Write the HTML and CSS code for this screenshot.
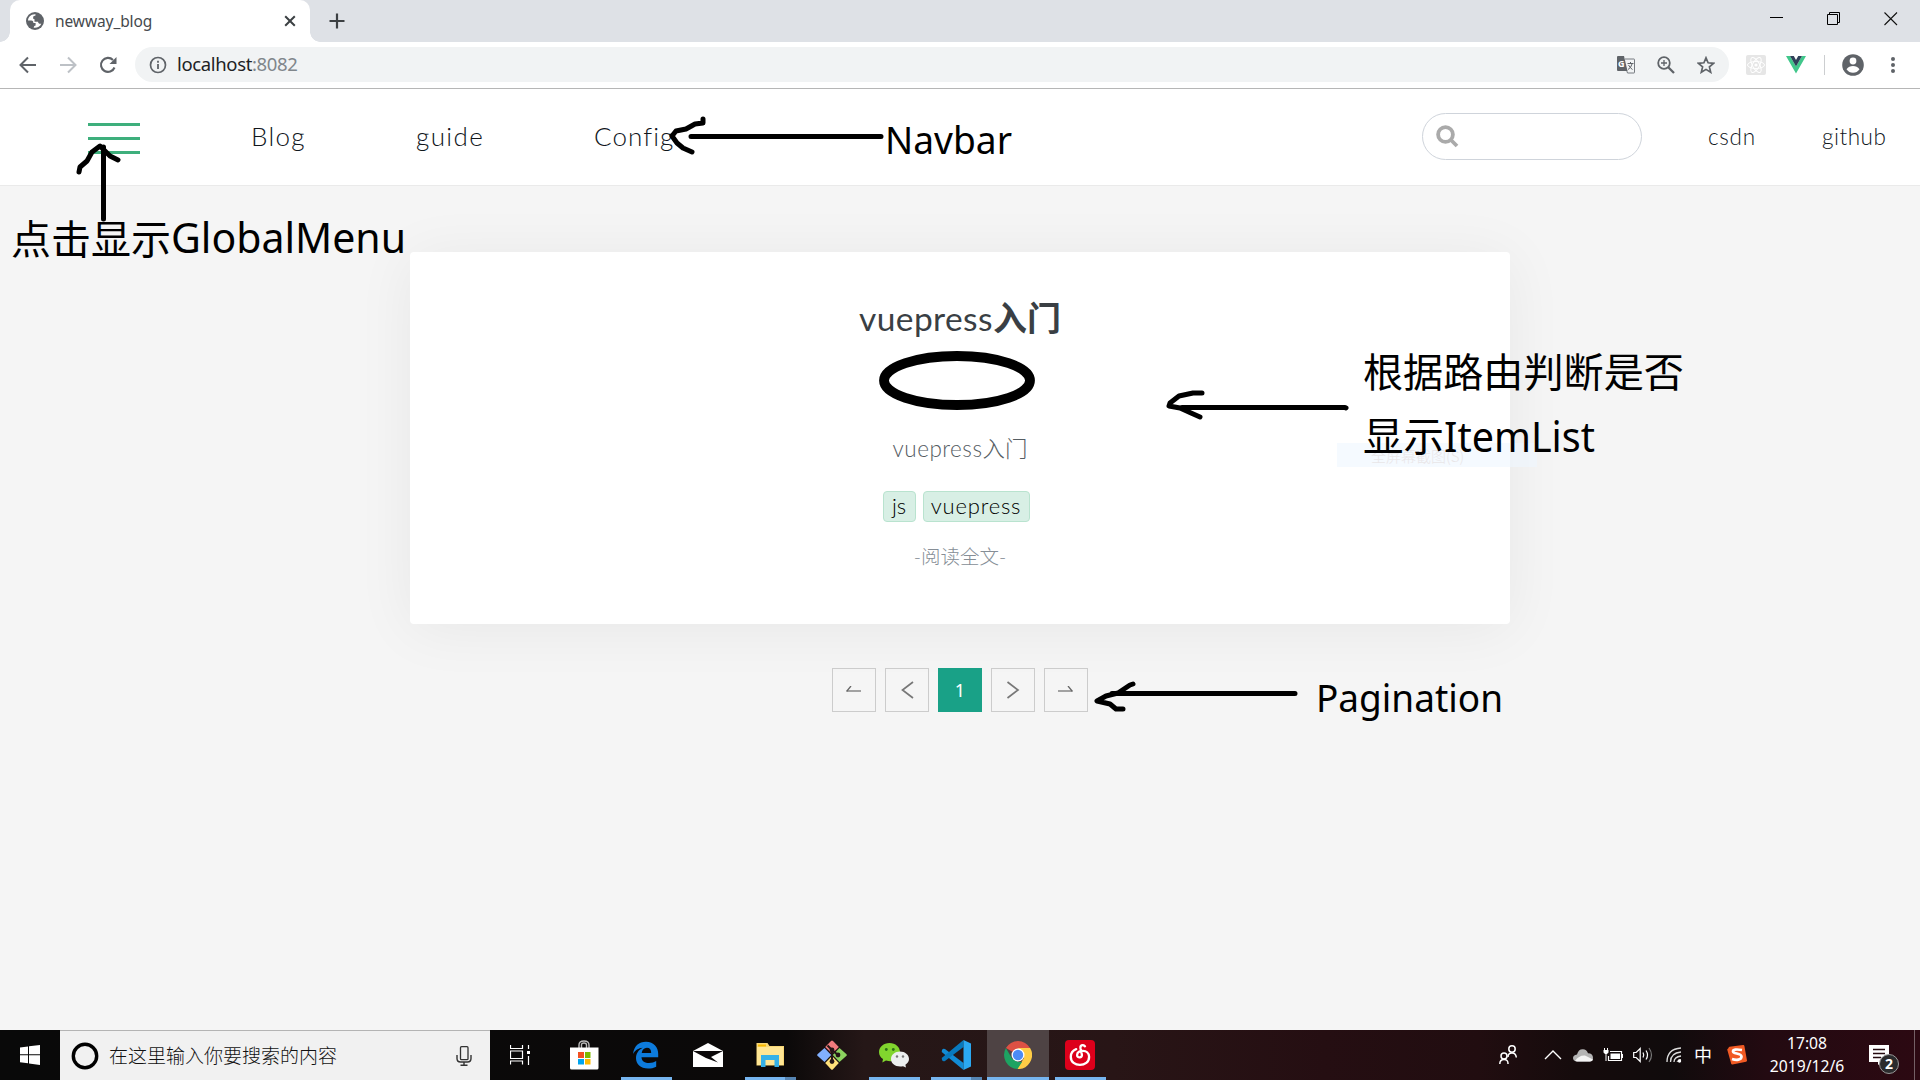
FILE: index.html
```html
<!DOCTYPE html>
<html lang="zh-CN">
<head>
<meta charset="utf-8">
<title>newway_blog</title>
<link rel="stylesheet" href="styles.css">
</head>
<body>
<div class="screen">
  <header class="tabstrip">
    <div class="tab">
      <svg class="favicon" width="18" height="18" viewBox="0 0 18 18"><circle cx="9" cy="9" r="9" fill="#5f6368"/><path d="M9.500 2.200C5 1.800 2 5 2 8.600h3.300c1.700 0 2.100 1 2.100 2.300H9.600v2.600c-1 .200-1.700.700-1.900 2.200 3 .5 6.400-.9 7.600-3.900-2.200.200-3.200-.5-3.200-2.100H8.500V7.300L7 6.500 7.400 4.300 9.500 3.500Z" fill="#fff"/></svg>
      <span class="tab-title">newway_blog</span>
      <svg width="12" height="12" viewBox="0 0 12 12"><path d="M1.200 1.200l9.600 9.600M10.800 1.200L1.200 10.800" stroke="#3c4043" stroke-width="2"/></svg>
    </div>
    <svg class="new-tab" width="16" height="16" viewBox="0 0 16 16"><path d="M8 .500v15M.5 8h15" stroke="#3c4043" stroke-width="2.200"/></svg>
    <div class="window-buttons">
      <svg width="14" height="14" viewBox="0 0 14 14"><path d="M0 5.500h13" stroke="#000"/></svg>
      <svg width="14" height="14" viewBox="0 0 14 14"><path d="M.5 2.500h10v10H.5zM2.500 2.500v-2h10v10h-2" fill="none" stroke="#000"/></svg>
      <svg width="14" height="14" viewBox="0 0 14 14"><path d="M.5.5l12.500 12.500M13 .5L.5 13" stroke="#111" stroke-width="1.100"/></svg>
    </div>
  </header>

  <div class="toolbar">
    <div class="history">
      <svg width="18" height="18" viewBox="0 0 18 18"><path d="M17 9H2M9 1.500L1.500 9 9 16.500" fill="none" stroke="#5f6368" stroke-width="2"/></svg>
      <svg width="18" height="18" viewBox="0 0 18 18"><path d="M1 9h15M9 1.500L16.500 9 9 16.500" fill="none" stroke="#bdc1c6" stroke-width="2"/></svg>
      <svg width="18" height="18" viewBox="0 0 18 18"><path d="M15.500 11.500A7 7 0 1 1 14 4" fill="none" stroke="#5f6368" stroke-width="2.100"/><path d="M17.500 1v7h-7z" fill="#5f6368"/></svg>
    </div>
    <div class="address">
      <svg width="18" height="18" viewBox="0 0 18 18"><circle cx="9" cy="9" r="7.500" fill="none" stroke="#5f6368" stroke-width="1.700"/><path d="M9 8v5M9 4.800v1.900" stroke="#5f6368" stroke-width="1.800"/></svg>
      <span class="url">localhost<span class="port">:8082</span></span>
      <div class="address-actions">
        <svg width="18" height="18" viewBox="0 0 18 18"><path d="M8 3h9q.5 0 .5.5v13q0 .5-.5.5h-6.500l-1-3" fill="none" stroke="#777b80"/><path d="M1 0h6l3.500 15H1Q0 15 0 14V1Q0 0 1 0Z" fill="#5f6368"/><path d="M10.500 7.500h6M13.500 6v1.500M15 8q-1 4-4 5.500M11.500 9q2 3.500 4 4.500" fill="none" stroke="#5f6368"/><text x="1" y="11" font-size="9" font-weight="700" fill="#fff">G</text></svg>
        <svg width="18" height="18" viewBox="0 0 18 18"><circle cx="7" cy="7" r="5.800" fill="none" stroke="#5f6368" stroke-width="1.800"/><path d="M11 11l6 6" stroke="#5f6368" stroke-width="2.300"/><path d="M7 4v6M4 7h6" stroke="#5f6368" stroke-width="1.300"/></svg>
        <svg width="18" height="18" viewBox="0 0 18 18"><path d="M9 1.800l2.100 5 5.500.5-4.200 3.600 1.300 5.400L9 13.400l-4.700 2.900 1.300-5.400L1.400 7.300l5.500-.5z" fill="none" stroke="#5f6368" stroke-width="1.700"/></svg>
      </div>
    </div>
    <div class="extensions">
      <svg width="20" height="20" viewBox="0 0 20 20"><rect width="20" height="20" rx="2" fill="#e6e6e6"/><g fill="none" stroke="#fff" stroke-width="1"><ellipse cx="10" cy="10" rx="8.500" ry="3.500"/><ellipse cx="10" cy="10" rx="8.500" ry="3.500" transform="rotate(60 10 10)"/><ellipse cx="10" cy="10" rx="8.500" ry="3.500" transform="rotate(120 10 10)"/></g><circle cx="10" cy="10" r="1.600" fill="#fff"/></svg>
      <svg width="20" height="18" viewBox="0 0 20 18"><path d="M0 0h4l6 10.500L16 0h4L10 17.500z" fill="#41c78b"/><path d="M4 0h3.800L10 4l2.200-4H16l-6 10.500z" fill="#2f4059"/></svg>
      <span class="separator"></span>
      <svg width="22" height="22" viewBox="0 0 22 22"><circle cx="11" cy="11" r="10.800" fill="#5f6368"/><circle cx="11" cy="7" r="3.400" fill="#fff"/><path d="M4.500 15.200Q7 12 11 12t6.500 3.200Q15 18.700 11 18.700T4.500 15.200Z" fill="#fff"/></svg>
      <svg width="6" height="18" viewBox="0 0 6 18"><g fill="#5f6368"><circle cx="3" cy="3" r="2"/><circle cx="3" cy="9" r="2"/><circle cx="3" cy="15" r="2"/></g></svg>
    </div>
  </div>

  <nav class="navbar">
    <button class="menu-button" aria-label="menu"><span></span><span></span><span></span></button>
    <a class="nav-link nav-blog">Blog</a>
    <a class="nav-link nav-guide">guide</a>
    <a class="nav-link nav-config">Config</a>
    <div class="search">
      <svg width="23" height="23" viewBox="0 0 23 23"><circle cx="9.500" cy="9.500" r="7.400" fill="none" stroke="#aaa" stroke-width="3.800"/><path d="M14.500 14.500l6.500 6.500" stroke="#aaa" stroke-width="3.800"/></svg>
    </div>
    <a class="side-link csdn">csdn</a>
    <a class="side-link github">github</a>
  </nav>

  <main class="content">
    <article class="card">
      <h1 class="card-title">vuepress<b>入门</b></h1>
      <p class="summary">vuepress<span>入门</span></p>
      <div class="tags"><span class="tag tag-js">js</span><span class="tag tag-vuepress">vuepress</span></div>
      <a class="more">-阅读全文-</a>
    </article>
    <div class="pagination">
      <span class="page"><svg width="16" height="8" viewBox="0 0 16 8"><path d="M1 5h14" stroke="#999" stroke-width="1.800"/><path d="M.5 5.500L5 0" stroke="#666" stroke-width="1.300"/></svg></span>
      <span class="page"><svg width="14" height="18" viewBox="0 0 14 18"><path d="M13 1L2.500 9 13 17" fill="none" stroke="#777" stroke-width="1.700"/></svg></span>
      <span class="page current">1</span>
      <span class="page"><svg width="14" height="18" viewBox="0 0 14 18"><path d="M1.500 1L12 9 1.500 17" fill="none" stroke="#777" stroke-width="1.700"/></svg></span>
      <span class="page"><svg width="16" height="8" viewBox="0 0 16 8"><path d="M0 5h14" stroke="#999" stroke-width="1.800"/><path d="M14.500 5.500L10 0" stroke="#666" stroke-width="1.300"/></svg></span>
    </div>
  </main>

  <footer class="taskbar">
    <div class="start"><svg width="20" height="20" viewBox="0 0 20 20"><path d="M0 2.600L8 1.500v7.800H0zM9 1.300L20 0v9.300H9zM0 10.300h8v7.900L0 17.200zM9 10.300h11V20L9 18.500z" fill="#fff"/></svg></div>
    <div class="task-search">
      <svg width="28" height="28" viewBox="0 0 28 28"><circle cx="14" cy="14" r="11.700" fill="none" stroke="#000" stroke-width="3.400"/></svg>
      <span>在这里输入你要搜索的内容</span>
      <svg width="16" height="20" viewBox="0 0 16 20"><rect x="4.500" y=".7" width="7.500" height="13" rx="1" fill="none" stroke="#333" stroke-width="1.300"/><path d="M1 9v3.500q0 3.500 3.500 3.500h7q3.500 0 3.500-3.500V9M8 16v3M4.500 19.200h7" fill="none" stroke="#333" stroke-width="1.400"/></svg>
    </div>
    <div class="app task-view"><svg width="20" height="20" viewBox="0 0 20 20"><path d="M.5 0v3.500h12V0M.5 19.500V16h12v3.500M.5 6h12v7.500H.5zM18.500 0v4M18.500 11v9" fill="none" stroke="#fff" stroke-width="1.200"/><path d="M17 6h3v3h-3z" fill="#fff"/></svg></div>
    <div class="app"><svg width="30" height="30" viewBox="0 0 30 30"><path d="M10 8V5q0-4 5-4t5 4v3M12.500 8V5q0-2 2.500-2t2.500 2v3" fill="none" stroke="#bbb" stroke-width="1.400"/><path d="M1 7.500h28.500V28q0 1.500-1.500 1.500H2.500Q1 29.500 1 28z" fill="#fff"/><path d="M9 12h6v6H9z" fill="#f25022"/><path d="M16 12h5.500v6H16z" fill="#7fba00"/><path d="M9 19h6v5.500H9z" fill="#00a4ef"/><path d="M16 19h5.500v5.500H16z" fill="#ffb900"/></svg></div>
    <div class="app open"><svg width="26" height="28" viewBox="0 0 26 28"><path d="M0 13C1 5 6 .8 13 .8c8 0 12.200 5.800 12.200 12v3.500H8.500c.3 4.300 3.500 5.800 7.500 5.800 3 0 5.300-.9 7.200-2v5.600c-2.400 1.300-5.300 1.900-8.200 1.900C7.500 27.600 3 23 3 17.300c0-4.500 2.300-8.300 6.700-10.500C5.500 7 2 9.500 0 13Zm8.700-1h9.500c.1-3.300-1.600-5.200-4.300-5.200-2.900 0-4.700 2.100-5.200 5.200Z" fill="#0d7bdc"/></svg></div>
    <div class="app"><svg width="30" height="24" viewBox="0 0 30 24"><path d="M0 8L15 0l15 8v16H0z" fill="#fff"/><path d="M0 8h30L18 14l7 5.500L13 15z" fill="#0b0809"/></svg></div>
    <div class="app open multi"><svg width="28" height="24" viewBox="0 0 28 24"><path d="M.5 0h11l2 3H28v19.500H.5z" fill="#f8d775"/><path d="M1 4h26v18H1z" fill="#ffe694"/><path d="M2 1.500h8v2H2z" fill="#f8b900"/><path d="M5 24V12h18v12h-4.500v-7h-9v7z" fill="#35b1e8"/></svg></div>
    <div class="app"><svg width="30" height="30" viewBox="0 0 30 30"><path d="M14 1q1-1 2 0l5.800 6-6.800 6.800L8.200 7z" fill="#f17b7d"/><path d="M7.500 8l6.700 7-6.700 7L.5 15.800q-.7-.8 0-1.600z" fill="#81b0ff"/><path d="M22.500 8l7 6.200q.7.800 0 1.600l-7 6.200-6.700-7z" fill="#8bd35f"/><path d="M15 16l6.800 7-5.800 6.300q-1 1-2 0L8.200 23z" fill="#ffe17a"/><path d="M10.500 5.500L15 10v12M15 10l6 5" stroke="#251717" stroke-width="2" fill="none"/><g fill="#251717"><circle cx="15" cy="10" r="2.400"/><circle cx="21" cy="15" r="2.400"/><circle cx="15" cy="21.500" r="2.400"/></g></svg></div>
    <div class="app open"><svg width="30" height="26" viewBox="0 0 30 26"><path d="M10.500 1C4.500 1 0 5 0 10c0 3 1.500 5.500 4 7L3.300 20.500 7 18.600C17 21 21 15 21 10S16.500 1 10.500 1Z" fill="#81d52e"/><circle cx="7.300" cy="7.500" r="1.400" fill="#2d7018"/><circle cx="14.300" cy="7.500" r="1.400" fill="#2d7018"/><path d="M21 9.500c-5 0-9 3.300-9 7.500 0 5 5 8.400 12 7.200l3 1.300-.6-2.700c2.200-1.500 3.600-3.500 3.600-5.800 0-4.200-4-7.500-9-7.500Z" fill="#eceff0"/><circle cx="18" cy="14.500" r="1.200" fill="#777"/><circle cx="24" cy="14.500" r="1.200" fill="#777"/></svg></div>
    <div class="app open multi"><svg width="30" height="30" viewBox="0 0 30 30"><path d="M1 10q1-2 3-1l18.500 14V30L.7 12z" fill="#128bd5"/><path d="M1 20q1 2 3 1L22.500 7V0L.7 18z" fill="#0879be"/><path d="M22.500 0L30 3.500v23L22.500 30z" fill="#2ba8f2"/></svg></div>
    <div class="app open active"><svg width="28" height="28" viewBox="0 0 28 28"><path d="M14 14L1.900 7A14 14 0 0 1 26.100 7z" fill="#dd5144"/><path d="M14 7h12.100A14 14 0 0 1 13 28l7-11z" fill="#ffcd46"/><path d="M1.900 7L8 17.500 14 21h4l-4.500 7A14 14 0 0 1 1.900 7Z" fill="#1da362"/><circle cx="14" cy="14" r="6.500" fill="#fff"/><circle cx="14" cy="14" r="5.200" fill="#4c8bf5"/></svg></div>
    <div class="app open"><svg width="30" height="30" viewBox="0 0 30 30"><rect width="30" height="30" rx="4" fill="#dd001b"/><path d="M20 6.300c-2.500-2.300-5-.8-4.500 2l1.400 6.500c.6 3-4.800 3.900-4.800.2 0-5.500 11.800-6.200 12 1.700.2 11-18.500 11-18.300 0 .1-4 2.200-6.300 5.400-7.500" fill="none" stroke="#fff" stroke-width="2.300" stroke-linecap="round"/></svg></div>
    <div class="tray">
      <div class="tray-icon people"><svg width="18" height="20" viewBox="0 0 18 20"><g fill="none" stroke="#fff" stroke-width="1.500"><circle cx="13" cy="4" r="3.200"/><circle cx="5" cy="11" r="3"/><path d="M9 12q0-4 4-4t4.300 4.500M.8 19q0-4.500 4.200-4.500T9 19"/></g></svg></div>
      <div class="tray-icon"><svg width="18" height="10" viewBox="0 0 18 10"><path d="M1 9l8-8 8 8" fill="none" stroke="#fff" stroke-width="1.400"/></svg></div>
      <div class="tray-icon"><svg width="20" height="13" viewBox="0 0 20 13"><path d="M4 12.500Q0 12 0 9q0-3 4-3.500Q5.500 0 10 .3q3.500.2 5 4Q20 4.500 20 9q0 3-3 3.500z" fill="#b4b4b4"/><path d="M2 12Q6 6 12 6.500l8 4q-.5 2-3 2H4z" fill="#f4f4f4"/></svg></div>
      <div class="tray-icon"><svg width="20" height="14" viewBox="0 0 20 14"><path d="M7 3.500h11.500v9h-13V8M19.500 6v4" fill="none" stroke="#fff" stroke-width="1.200"/><path d="M7.500 5.500H17V11H7.500zM.5 2h5v2.500L4 6H2L.5 4.500z" fill="#fff"/><path d="M1.500 0v2M4.500 0v2M3 6v7" stroke="#fff"/></svg></div>
      <div class="tray-icon"><svg width="20" height="16" viewBox="0 0 20 16"><path d="M.7 5.500h2.500l4-4v13l-4-4H.7z" fill="none" stroke="#fff" stroke-width="1.200"/><path d="M10 5.500q1.500 2.500 0 5M13 3.500q3 4.500 0 9" fill="none" stroke="#fff" stroke-width="1.200"/><path d="M16 1q5 7 0 14" fill="none" stroke="#777" stroke-width="1.200"/></svg></div>
      <div class="tray-icon wifi"><svg width="16" height="16" viewBox="0 0 16 16"><path d="M1 15Q1 2 15 1M4.500 15Q4.500 6 15 5M8 15q0-5 7-6" fill="none" stroke="#ddd" stroke-width="1.300"/><path d="M11 15q0-2 4-2.500" fill="none" stroke="#ddd"/><circle cx="13.500" cy="14" r="1.700" fill="#fff"/></svg></div>
      <div class="tray-icon ime">中</div>
      <div class="tray-icon sogou"><svg width="20" height="20" viewBox="0 0 20 20"><path d="M1.500 3Q1.500 2 2.500 1.800L16 0q1.200-.1 1.400 1L20 15.500q.1 1-.9 1.200L5.500 19.500q-1 .2-1.300-.8L.2 4.500z" fill="#f15a24"/><path d="M15 5q-9-1.500-9 1.500C6 9 14.500 8 14.500 11.500c0 3.500-5 4-9.500 2.500" fill="none" stroke="#fff" stroke-width="2.700"/></svg></div>
      <div class="clock"><span>17:08</span><span>2019/12/6</span></div>
      <div class="notice"><svg width="20" height="20" viewBox="0 0 20 20"><path d="M0 0h20v17h-7l-4 3v-3H0z" fill="#fff"/><path d="M4 4.500h12M4 8.500h12M4 12.500h8" stroke="#250b10" stroke-width="1.300"/></svg><span class="badge">2</span></div>
      <div class="show-desktop"></div>
    </div>
  </footer>

  <div class="ghost">全屏幕截图(S)</div>

  <svg class="notes" width="1920" height="1080" viewBox="0 0 1920 1080">
    <g fill="none" stroke="#000" stroke-width="5" stroke-linecap="round" stroke-linejoin="round">
      <path d="M103.500 147V219M79 172l1-5 7-6 5-9 8-6 4 4 6 6 8 4"/>
      <path d="M691 136.500H881M703 119v4l-8 1-9 5-10 2-4 5 5 7 6 5 9 4"/>
      <path d="M1182 407.500H1345l1 .5M1202 393h-9l-14 3-9 7-1 3 11 2 11 5 9 4"/>
      <path d="M1112 693.500H1295M1133 684l-3 1-12 8-12 3-9 5 13 3 6 5h7"/>
    </g>
    <ellipse cx="957" cy="380.500" rx="73" ry="24.500" fill="none" stroke="#000" stroke-width="9.800"/>
    <g class="note-text">
      <text x="885" y="153.500" textLength="127" lengthAdjust="spacingAndGlyphs">Navbar</text>
      <text x="11" y="254" class="cjk" textLength="160" lengthAdjust="spacingAndGlyphs">点击显示</text>
      <text x="171" y="253" class="tall" textLength="235" lengthAdjust="spacingAndGlyphs">GlobalMenu</text>
      <text x="1363" y="387" class="cjk" textLength="321" lengthAdjust="spacingAndGlyphs">根据路由判断是否</text>
      <text x="1363" y="451" class="cjk" textLength="81" lengthAdjust="spacingAndGlyphs">显示</text>
      <text x="1444" y="451.500" class="tall" textLength="151" lengthAdjust="spacingAndGlyphs">ItemList</text>
      <text x="1316" y="711.500" textLength="187" lengthAdjust="spacingAndGlyphs">Pagination</text>
    </g>
  </svg>
</div>
</body>
</html>
```
FILE: styles.css
```css
* { box-sizing: border-box; }
body { margin: 0; font-family: "Open Sans", "Noto Sans CJK SC", sans-serif; }
svg { display: block; flex: none; }
.screen { position: relative; width: 1920px; height: 1080px; overflow: hidden; display: flex; flex-direction: column; background: #f5f5f5; }

/* browser chrome */
.tabstrip { height: 42px; flex: none; display: flex; background: #dee1e6; padding-left: 10px; }
.tab { position: relative; width: 300px; display: flex; align-items: center; padding: 0 14px 0 16px; background: #fff; border-radius: 10px 10px 0 0; }
.tab::before, .tab::after { content: ""; position: absolute; bottom: 0; width: 10px; height: 10px; }
.tab::before { left: -10px; background: radial-gradient(circle at 0 0, transparent 9.5px, #fff 10px); }
.tab::after { right: -10px; background: radial-gradient(circle at 100% 0, transparent 9.5px, #fff 10px); }
.tab-title { flex: 1; padding-left: 11px; font-family: "Noto Sans", sans-serif; font-size: 15.500px; letter-spacing: -.1px; color: #45494d; }
.new-tab { margin: 13px 0 0 19px; }
.window-buttons { margin-left: auto; display: flex; gap: 43px; padding: 12px 22px 0 0; }
.toolbar { height: 47px; flex: none; display: flex; align-items: center; background: #fff; border-bottom: 1px solid #b6b6b6; padding-bottom: 1px; }
.history { width: 135px; display: flex; gap: 22px; padding-left: 19px; }
.address { width: 1594px; height: 35px; display: flex; align-items: center; padding: 0 14px; border-radius: 18px; background: #f1f3f4; }
.url { padding: 0 0 2px 10px; font-family: "Noto Sans", sans-serif; font-size: 18.500px; letter-spacing: -.35px; color: #202124; }
.port { color: #80868b; }
.address-actions { margin-left: auto; display: flex; gap: 22px; }
.extensions { display: flex; align-items: center; padding-left: 17px; }
.extensions svg:nth-child(2) { margin-left: 20px; }
.separator { width: 1px; height: 20px; margin: 0 17px 0 18px; background: #ccced0; }
.extensions svg:last-child { margin-left: 26px; }

/* site navigation */
.navbar { height: 97px; flex: none; display: flex; align-items: center; background: #fff; border-bottom: 1px solid #eaeaea; font-family: Lato, sans-serif; font-weight: 300; color: #10161c; padding: 0 0 2px 88px; }
.menu-button { width: 52px; padding: 0; border: 0; background: none; display: flex; flex-direction: column; gap: 11px; margin-top: 5px; }
.menu-button span { height: 3px; background: #3eaf7c; }
.nav-link { font-size: 26px; white-space: nowrap; }
.nav-blog { width: 165px; margin-left: 111px; letter-spacing: 1.300px; }
.nav-guide { width: 178px; letter-spacing: 1.400px; }
.nav-config { width: 828px; letter-spacing: 1.100px; }
.search { width: 220px; height: 47px; border: 1px solid #cfd4db; border-radius: 24px; padding: 11px 13px; }
.side-link { font-size: 22.500px; }
.csdn { width: 114px; margin-left: 66px; letter-spacing: .7px; }
.github { letter-spacing: .5px; }

.content { flex: 1; display: flex; flex-direction: column; align-items: center; padding-top: 66px; }
.card { width: 1100px; height: 372px; display: flex; flex-direction: column; align-items: center; border-radius: 4px; background: #fff; box-shadow: 0 5px 60px rgba(0, 0, 0, .06); font-family: Lato, "Noto Sans CJK SC", sans-serif; }
.card-title { margin: 46px 0 0; height: 40px; line-height: 40px; font-size: 33.500px; font-weight: 400; letter-spacing: .4px; color: #3a3f44; white-space: nowrap; }
.card-title b { letter-spacing: 0; font-size: 34px; }
.summary { margin: 95px 0 0; height: 32px; line-height: 32px; font-size: 22.500px; font-weight: 300; letter-spacing: .5px; color: #565d63; }
.summary span { letter-spacing: 0; }
.tags { display: flex; gap: 7px; margin: 26px 8px 0 0; }
.tag { height: 31px; line-height: 28px; border: 1px solid #b9e3cf; border-radius: 4px; background: #d8efe5; text-align: center; font-size: 22px; font-weight: 300; color: #000; }
.tag-js { width: 33px; }
.tag-vuepress { width: 107px; letter-spacing: .8px; }
.more { margin-top: 21px; line-height: 28px; font-size: 19.500px; font-weight: 300; color: #868e96; }
.pagination { display: flex; gap: 9px; margin-top: 44px; }
.page { width: 44px; height: 44px; display: flex; align-items: center; justify-content: center; border: 1px solid #ccc; font-family: "Noto Sans", sans-serif; font-size: 18px; }
.current { border-color: #19a187; background: #19a187; color: #fff; }

/* desktop taskbar */
.taskbar { height: 50px; flex: none; display: flex; color: #fff; background: linear-gradient(90deg, #090909 0, #0b0909 41%, #251717 45%, #281516 58%, #250e12 69%, #210d10 77%, #150b0c 82%, #100b0c 87%, #230a11 92%, #2c0912 100%); }
.start { width: 60px; padding: 15px 0 0 20px; }
.task-search { width: 430px; display: flex; align-items: center; padding: 0 18px 0 11px; border-top: 1px solid #b4b4b4; background: #f1f1f1; color: #111; }
.task-search span { flex: 1; padding: 0 0 3px 10px; font-family: "Noto Sans CJK SC", sans-serif; font-weight: 300; font-size: 19px; }
.app { position: relative; width: 62px; display: flex; align-items: center; justify-content: center; }
.task-view { width: 63px; padding-right: 3px; }
.app.open::after { content: ""; position: absolute; bottom: 0; left: 6px; width: 51px; height: 3px; background: #76b5ef; }
.app.multi::after { background: linear-gradient(90deg, #76b5ef 40px, #5685b3 40px); }
.app.active { background: #4e4344; }
.app.active::after { left: 0; width: 62px; }
.tray { margin-left: auto; display: flex; align-items: stretch; }
.tray-icon { width: 30px; display: flex; align-items: center; justify-content: center; }
.people { margin-right: 15px; }
.wifi { width: 31px; }
.ime { width: 28px; font-size: 18px; padding-bottom: 2px; font-family: "Noto Sans CJK SC", sans-serif; }
.sogou { width: 41px; padding-right: 1px; }
.clock { width: 98px; display: flex; flex-direction: column; align-items: center; padding-top: 2px; line-height: 23px; font-size: 15.700px; font-family: "Noto Sans", sans-serif; }
.notice { position: relative; width: 58px; padding: 15px 0 0 13px; }
.badge { position: absolute; left: 23px; top: 24px; width: 20px; height: 20px; line-height: 18px; border: 1px solid #999; border-radius: 50%; background: #2b2b2d; text-align: center; font-size: 14px; font-weight: 700; }
.show-desktop { width: 6px; border-left: 1px solid #746065; }

/* annotations over the page */
.ghost { position: absolute; left: 1337px; top: 443px; width: 200px; height: 24px; padding-left: 34px; line-height: 25px; background: rgba(238, 247, 255, .6); color: #e9e6e8; font-size: 15px; font-family: "Noto Sans CJK SC", sans-serif; font-weight: 300; }
.notes { position: absolute; left: 0; top: 0; }
.note-text { font-family: "Noto Sans", sans-serif; font-size: 38.500px; fill: #000; }
.note-text .tall { font-size: 41.500px; }
.note-text .cjk { font-family: "Noto Sans CJK SC", sans-serif; font-size: 40px; }
```
